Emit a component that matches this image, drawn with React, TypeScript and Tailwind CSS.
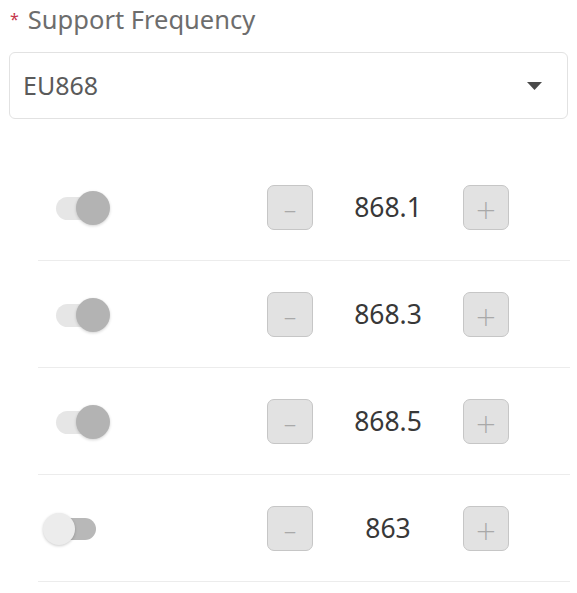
const rows = [
  { on: true, value: '868.1' },
  { on: true, value: '868.3' },
  { on: true, value: '868.5' },
  { on: false, value: '863' },
];

function Toggle({ on }: { on: boolean }) {
  return (
    <div className="relative h-[36px] w-[68px]">
      {on ? (
        <>
          <div className="absolute left-[13px] top-[7px] h-[23px] w-[46px] rounded-full bg-[#e6e6e6]" />
          <div className="absolute left-[33px] top-[1px] h-[34px] w-[34px] rounded-full bg-[#b3b3b3] shadow-[0_1px_3px_rgba(0,0,0,0.18)]" />
        </>
      ) : (
        <>
          <div className="absolute left-[13px] top-[7px] h-[22px] w-[40px] rounded-full bg-[#b8b8b8]" />
          <div className="absolute left-0 top-[2px] h-[32px] w-[32px] rounded-full bg-[#ececec] shadow-[0_1px_3px_rgba(0,0,0,0.2)]" />
        </>
      )}
    </div>
  );
}

function StepButton({ children }: { children: string }) {
  return (
    <div className="flex h-[45px] w-[46px] items-center justify-center rounded-[7px] border border-[#c6c6c6] bg-[#e2e2e2] pt-[5px] font-['DejaVu_Sans',sans-serif] text-[26px] font-extralight leading-none text-[#a9a9a9]">
      {children}
    </div>
  );
}

export default function App() {
  return (
    <div className="min-h-[593px] bg-white font-['Noto_Sans',sans-serif]">
      <div className="flex items-center pl-[10px] pt-[2px] text-[25.5px] leading-[34px] text-[#6d6d6d]">
        <span className="mr-[9px] text-[16px] text-[#c5364c]">*</span>
        Support Frequency
      </div>
      <div className="mx-[9px] mt-[16px] flex h-[67px] items-center justify-between rounded-[6px] border border-[#e2e2e2] pl-[13px] pr-[25px] text-[25px] text-[#5a5a5a]">
        <span>EU868</span>
        <svg width="15" height="8" viewBox="0 0 15 8">
          <path d="M0 0h15L7.5 8z" fill="#4a4a4a" />
        </svg>
      </div>
      <div className="ml-[38px] mr-[7px] mt-[35px]">
        {rows.map((r) => (
          <div key={r.value} className="flex h-[107px] items-center border-b border-[#ececec] pt-[1px]">
            <div className="ml-[5px] w-[224px]">
              <Toggle on={r.on} />
            </div>
            <StepButton>–</StepButton>
            <div className="w-[150px] text-center text-[26.5px] text-[#383838]">{r.value}</div>
            <StepButton>+</StepButton>
          </div>
        ))}
      </div>
    </div>
  );
}
